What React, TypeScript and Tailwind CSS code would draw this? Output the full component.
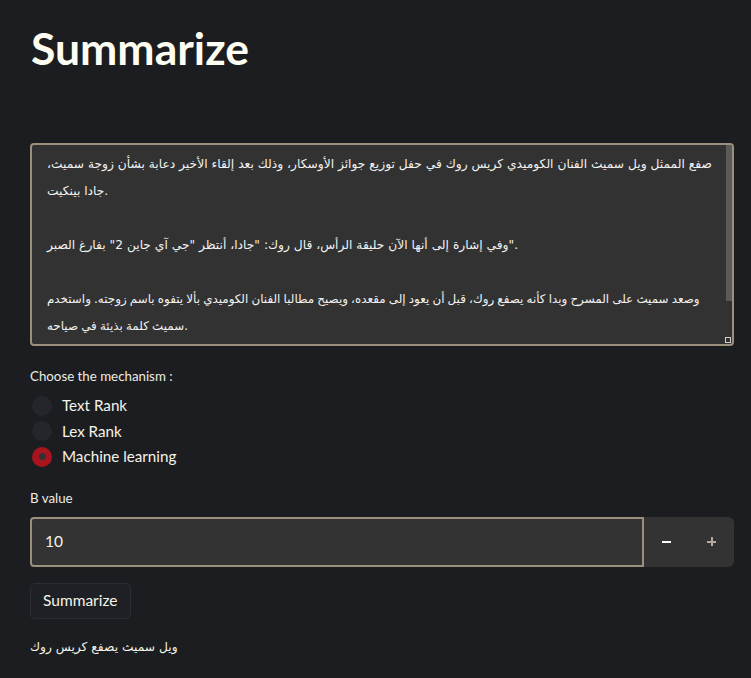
import { useState } from 'react';

const paragraphs = [
  'صفع الممثل ويل سميث الفنان الكوميدي كريس روك في حفل توزيع جوائز الأوسكار، وذلك بعد إلقاء الأخير دعابة بشأن زوجة سميث، جادا بينكيت.',
  'وفي إشارة إلى أنها الآن حليقة الرأس، قال روك: "جادا، أنتظر "جي آي جاين 2" بفارغ الصبر".',
  'وصعد سميث على المسرح وبدا كأنه يصفع روك، قبل أن يعود إلى مقعده، ويصيح مطالبا الفنان الكوميدي بألا يتفوه باسم زوجته. واستخدم سميث كلمة بذيئة في صياحه.',
];

const mechanisms = ['Text Rank', 'Lex Rank', 'Machine learning'];

function Radio({ label, checked, onSelect }: { label: string; checked: boolean; onSelect: () => void }) {
  return (
    <label className="flex items-center gap-[10px] h-[25.5px] cursor-pointer" onClick={onSelect}>
      {checked ? (
        <span className="w-[20px] h-[20px] rounded-full bg-[#a8151f] flex items-center justify-center">
          <span className="w-[7px] h-[7px] rounded-full bg-[#333336]" />
        </span>
      ) : (
        <span className="w-[20px] h-[20px] rounded-full bg-[#25262b]" />
      )}
      <span className="text-[15.2px] text-[#f4f4ea]">{label}</span>
    </label>
  );
}

export default function App() {
  const [choice, setChoice] = useState(2);
  const [b, setB] = useState(10);

  return (
    <div className="min-h-screen bg-[#1c1d20] text-[#fafaf0] pl-[30px] pr-[17px] pb-[20px]" style={{ fontFamily: 'Lato, "Open Sans", sans-serif' }}>
      <h1 className="pt-[23px] text-[44.5px] font-bold leading-[50px] pl-[1px] text-[#fdfdf2]">Summarize</h1>

      {/* text area */}
      <div className="relative mt-[70px] h-[203px] rounded-[4px] border-2 border-[#9b8f7e] bg-[#323232] overflow-hidden">
        <div
          className="pl-[15px] pr-[10px] pt-[6px] text-[12.25px] leading-[27px] text-[#f2f2f2]"
          style={{ fontFamily: '"DejaVu Sans", sans-serif' }}
        >
          <p className="pr-[10px]">{paragraphs[0]}</p>
          <p className="mt-[27px]">{paragraphs[1]}</p>
          <p className="mt-[27px] text-[11.9px] [word-spacing:-0.6px]">{paragraphs[2]}</p>
        </div>
        <div className="absolute right-0 top-0 w-[6px] h-[156px] bg-[#5a5a5a]" />
        <div className="absolute right-[1px] bottom-[1px] w-[6px] h-[6px] border border-[#cfcfcf] bg-[#323232]" />
      </div>

      <div className="mt-[20px] text-[13.3px] text-[#ececE2] leading-[20px]">Choose the mechanism :</div>
      <div className="mt-[7px] flex flex-col pl-[2px]">
        {mechanisms.map((m, i) => (
          <Radio key={m} label={m} checked={choice === i} onSelect={() => setChoice(i)} />
        ))}
      </div>

      <div className="mt-[18px] text-[13.3px] text-[#ececE2] leading-[20px]">B value</div>
      <div className="mt-[9px] flex h-[50px] rounded-[6px] bg-[#333333]">
        <div className="flex-1 flex items-center rounded-l-[4px] border-2 border-[#9b8f7e] bg-[#333333] pl-[13px] text-[15.5px] text-[#f4f4ea]">
          {b}
        </div>
        <button className="w-[45px] flex items-center justify-center text-[#ffffff]" onClick={() => setB(b - 1)}>
          <span className="block w-[9px] h-[2px] bg-[#ffffff]" />
        </button>
        <button className="w-[45px] flex items-center justify-center" onClick={() => setB(b + 1)}>
          <span className="relative block w-[9px] h-[9px]">
            <span className="absolute left-0 top-[3.5px] w-[9px] h-[2px] bg-[#b3a99d]" />
            <span className="absolute top-0 left-[3.5px] w-[2px] h-[9px] bg-[#b3a99d]" />
          </span>
        </button>
      </div>

      <button className="mt-[16px] h-[36px] px-[12px] rounded-[5px] border border-[#2c2d33] bg-[#1f2025] text-[15.5px] text-[#f4f4ea]">
        Summarize
      </button>

      <div className="mt-[16px] text-[12.25px] leading-[24px] text-[#f4f4ea]" style={{ fontFamily: '"DejaVu Sans", sans-serif' }}>
        ويل سميث يصفع كريس روك
      </div>
    </div>
  );
}
